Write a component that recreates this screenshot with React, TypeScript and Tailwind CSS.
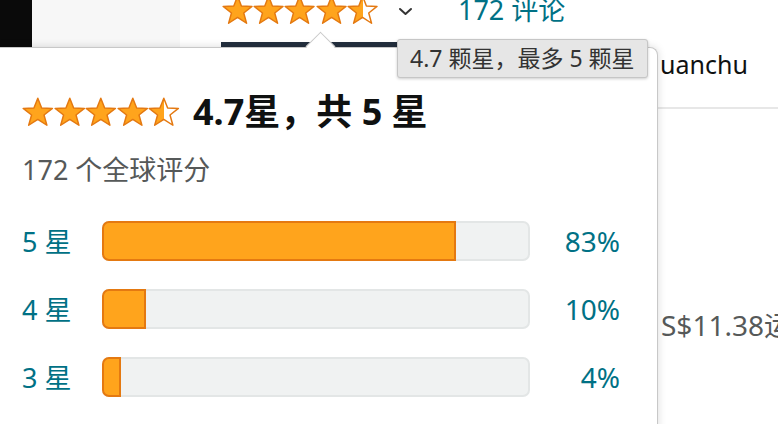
import { useId } from "react";

const STAR_PTS =
  "16,1.2 19.9,11.3 30.8,11.8 22.3,18.6 25.2,29.2 16,23.2 6.8,29.2 9.7,18.6 1.2,11.8 12.1,11.3";

function Star({ half = false, w = 31 }: { half?: boolean; w?: number }) {
  const raw = useId();
  const id = "g" + raw.replace(/[^a-zA-Z0-9]/g, "");
  return (
    <svg width={w} height="30" viewBox="0 0 32 31" preserveAspectRatio="none" className="shrink-0 block">
      {half && (
        <defs>
          <linearGradient id={id} x1="0" x2="1" y1="0" y2="0">
            <stop offset="50%" stopColor="#ffa41c" />
            <stop offset="50%" stopColor="#ffffff" />
          </linearGradient>
        </defs>
      )}
      <polygon
        points={STAR_PTS}
        fill={half ? `url(#${id})` : "#ffa41c"}
        stroke="#e47911"
        strokeWidth="1.5"
        strokeLinejoin="round"
      />
    </svg>
  );
}

function Stars({ w = 31 }: { w?: number }) {
  return (
    <div className="flex">
      <Star w={w} />
      <Star w={w} />
      <Star w={w} />
      <Star w={w} />
      <Star w={w} half />
    </div>
  );
}

const rows = [
  { s: 5, p: 83 },
  { s: 4, p: 10 },
  { s: 3, p: 4 },
];

export default function App() {
  return (
    <div className="relative w-[778px] h-[424px] overflow-hidden bg-white font-['Noto_Sans','Noto_Sans_CJK_SC',sans-serif]">
      {/* header */}
      <div className="flex h-[47px]">
        <div className="w-[32px] bg-[#0a0a0a]" />
        <div className="w-[148px] bg-[#f7f7f7]" />
        <div className="flex-1 flex flex-col pl-[41px]">
          <div className="flex items-start h-[42px]">
            <div className="-mt-[5px] ml-[1px]">
              <Stars w={31.2} />
            </div>
            <svg
              width="15"
              height="9"
              viewBox="0 0 15 9"
              className="ml-[20px] mt-[7px]"
            >
              <path
                d="M2 2 L7.5 7 L13 2"
                fill="none"
                stroke="#333"
                strokeWidth="2"
                strokeLinecap="round"
                strokeLinejoin="round"
              />
            </svg>
            <span className="ml-[45px] -mt-[5px] text-[27px] leading-[30px] text-[#007185] whitespace-nowrap">
              172 评论
            </span>
          </div>
          <div className="w-[199px] h-[5px] bg-[#232f3e]" />
        </div>
      </div>

      {/* page body behind popover */}
      <div className="flex">
        <div className="w-[658px] shrink-0" />
        <div className="flex-1 min-w-0">
          <div className="pl-[2px] text-[25px] leading-[34px] text-[#0f1111] whitespace-nowrap">
            uanchu
          </div>
          <div className="mt-[26px] h-[2px] bg-[#e7e7e7]" />
          <div className="mt-[199px] pl-[3px] text-[28px] leading-[34px] text-[#565959] whitespace-nowrap">
            S$11.38运
          </div>
        </div>
      </div>

      {/* popover */}
      <div className="absolute left-0 top-[47px] z-10 w-[658px] h-[400px] bg-white border-t border-r border-[#c8c8c8] rounded-tr-[8px] shadow-[0_0_8px_rgba(0,0,0,0.15)] pl-[22px] pt-[48px]">
        <div className="flex items-center h-[32px]">
          <Stars w={31.6} />
          <span className="ml-[13px] text-[36px] font-bold leading-none text-[#0f1111] whitespace-nowrap">
            4.7星，共 5 星
          </span>
        </div>
        <div className="mt-[27px] text-[27px] leading-[30px] text-[#565959]">
          172 个全球评分
        </div>
        <div className="mt-[36px] flex flex-col gap-[28px]">
          {rows.map((r) => (
            <div key={r.s} className="flex items-center h-[40px]">
              <span className="w-[80px] text-[27px] leading-none text-[#007185] whitespace-nowrap">
                {r.s} 星
              </span>
              <div className="relative w-[428px] h-[40px] rounded-[7px] border-2 border-[#e3e6e6] bg-[#f0f2f2]">
                <div
                  className="absolute -left-[2px] -top-[2px] -bottom-[2px] rounded-l-[7px] border-2 border-[#e47911] bg-[#ffa41c]"
                  style={{ width: `calc(${r.p}% + 2px)` }}
                />
              </div>
              <span className="w-[90px] text-right text-[28px] leading-none text-[#007185]">
                {r.p}%
              </span>
            </div>
          ))}
        </div>
      </div>

      {/* arrow */}
      <div className="absolute left-[310px] top-[36px] z-20 w-[21px] h-[21px] rotate-45 bg-white border-t border-l border-[#c8c8c8]" />

      {/* tooltip */}
      <div className="absolute left-[397px] top-[39px] z-30 h-[39px] px-[12px] flex items-center bg-[#e6e6e6] border border-[#c6c6c6] rounded-[3px] shadow-[0_1px_3px_rgba(0,0,0,0.2)] text-[23px] leading-none text-[#333] whitespace-nowrap">
        4.7 颗星，最多 5 颗星
      </div>
    </div>
  );
}
